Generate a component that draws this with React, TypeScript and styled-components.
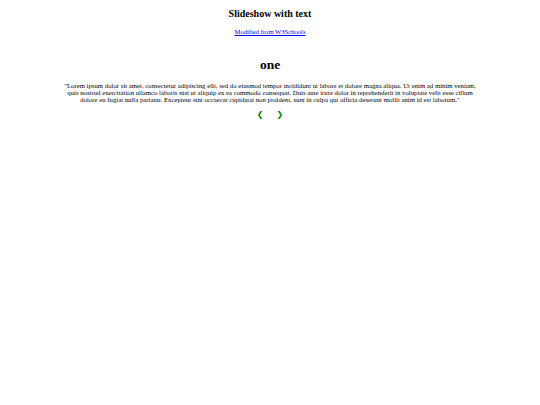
import { useState } from "react";
import styled, { createGlobalStyle } from "styled-components";

const GlobalStyle = createGlobalStyle`
  html, body {
    margin: 0;
    padding: 0;
    background: #fff;
  }
`;

const Page = styled.div`
  display: flex;
  flex-direction: column;
  align-items: center;
  padding-top: 7px;
  font-family: "Liberation Serif", "Times New Roman", serif;
  color: #000;
`;

const Heading = styled.h2`
  margin: 0;
  font-size: 10px;
  font-weight: bold;
  line-height: 14px;
`;

const SourceLink = styled.a`
  margin-top: 6px;
  font-size: 6.6px;
  line-height: 9px;
  color: #0000ee;
  text-decoration: underline;
`;

const Slide = styled.div`
  display: flex;
  flex-direction: column;
  align-items: center;
  margin-top: 21px;
`;

const SlideTitle = styled.h1`
  margin: 0;
  font-size: 13.5px;
  font-weight: bold;
  line-height: 16px;
`;

const Quote = styled.p`
  margin: 8.5px 0 0;
  width: 418px;
  font-size: 6.75px;
  line-height: 7px;
  text-align: center;
`;

const Controls = styled.div`
  display: flex;
  gap: 13px;
  margin-top: 7.5px;
`;

const Arrow = styled.button`
  border: 0;
  background: none;
  padding: 0;
  font-family: "DejaVu Sans", sans-serif;
  font-size: 8px;
  font-weight: bold;
  line-height: 10px;
  color: #008000;
  cursor: pointer;
`;

const slides = [
  {
    title: "one",
    text: "\"Lorem ipsum dolor sit amet, consectetur adipiscing elit, sed do eiusmod tempor incididunt ut labore et dolore magna aliqua. Ut enim ad minim veniam, quis nostrud exercitation ullamco laboris nisi ut aliquip ex ea commodo consequat. Duis aute irure dolor in reprehenderit in voluptate velit esse cillum dolore eu fugiat nulla pariatur. Excepteur sint occaecat cupidatat non proident, sunt in culpa qui officia deserunt mollit anim id est laborum.\"",
  },
  { title: "two", text: "\"Second slide text.\"" },
  { title: "three", text: "\"Third slide text.\"" },
];

export default function App() {
  const [index, setIndex] = useState(0);
  const slide = slides[index];

  return (
    <>
      <GlobalStyle />
      <Page>
        <Heading>Slideshow with text</Heading>
        <SourceLink href="#">Modified from W3Schools</SourceLink>
        <Slide>
          <SlideTitle>{slide.title}</SlideTitle>
          <Quote>{slide.text}</Quote>
          <Controls>
            <Arrow onClick={() => setIndex((index + slides.length - 1) % slides.length)}>❮</Arrow>
            <Arrow onClick={() => setIndex((index + 1) % slides.length)}>❯</Arrow>
          </Controls>
        </Slide>
      </Page>
    </>
  );
}
